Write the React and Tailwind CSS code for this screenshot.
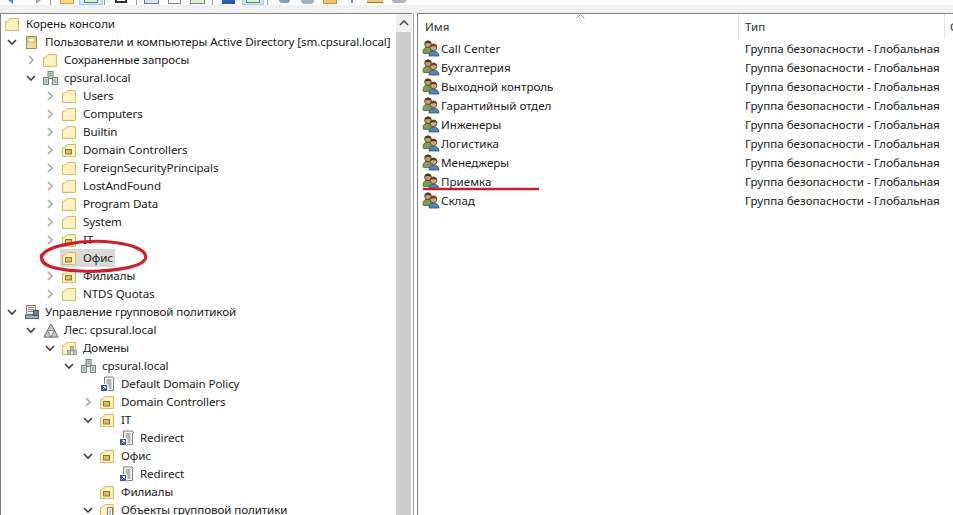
import React from "react";

function Chevron({ open }) {
  return open ? (
    <svg className="shrink-0" width="10" height="10" viewBox="0 0 10 10" fill="none" stroke="#404040" strokeWidth="1.6"><path d="M1 3l4 4 4-4" /></svg>
  ) : (
    <svg className="shrink-0" width="10" height="10" viewBox="0 0 10 10" fill="none" stroke="#a6a6a6" strokeWidth="1.6"><path d="M3 1l4 4-4 4" /></svg>
  );
}

function Folder({ ou, children }) {
  return (
    <svg className="shrink-0" width="15" height="14" viewBox="0 0 15 14">
      <path d="M.5 13.500V4.500h1.500l3-3h8.500v12z" fill="#fbe7a6" stroke="#dcbc6c" />
      <path d="M1.500 5.500h2l3-3h6v10h-11z" fill="#fff3c4" />
      {ou && <rect x="3.500" y="6.500" width="6" height="4.500" fill="#e3bb58" stroke="#8c7432" />}
      {children}
    </svg>
  );
}

function DomainShapes() {
  return (
    <>
      <rect x="5" y="0.500" width="5" height="7" fill="#c5d0cc" stroke="#71837f" />
      <rect x="0.500" y="6.500" width="5" height="7" fill="#cfdad5" stroke="#71837f" />
      <rect x="9.500" y="6.500" width="5" height="7" fill="#cfdad5" stroke="#71837f" />
      <path d="M2 9h2M2 11h2M11 9h2M11 11h2M6.500 2.500h2M6.500 4.500h2" stroke="#5fa35f" />
    </>
  );
}

function Domain() {
  return (
    <svg className="shrink-0" width="15" height="14" viewBox="0 0 15 14"><DomainShapes /></svg>
  );
}

function Snapin() {
  return (
    <svg className="shrink-0" width="15" height="15" viewBox="0 0 15 15">
      <rect x="2.500" y="1.500" width="10" height="12" fill="#efdc9a" stroke="#a08f50" />
      <rect x="4" y="3" width="7" height="4" fill="#fff8d2" stroke="#b5a467" strokeWidth=".8" />
    </svg>
  );
}

function Gpo() {
  return (
    <svg className="shrink-0" width="16" height="16" viewBox="0 0 16 16">
      <path d="M4.500 1h8.500l1.500 1.500-1 .5v11.500h-9z" fill="#f7f7f7" stroke="#7d7d7d" />
      <path d="M6.500 4h5M6.500 6h5M6.500 8h5M8.500 10h3M8.500 12h3" stroke="#777" />
      <rect x="0.500" y="8.500" width="7" height="7" fill="#3d4f9f" stroke="#fff" />
      <path d="M2.500 13.500l3-3M3.500 10.500h2v2" stroke="#fff" fill="none" />
    </svg>
  );
}

function Forest() {
  return (
    <svg className="shrink-0" width="16" height="15" viewBox="0 0 16 15">
      <path d="M8 1l7 13H1z" fill="#e9e9e9" stroke="#707070" />
      <path d="M8 1l3.500 6.500h-7zM4.500 7.500L8 14H1zM11.500 7.500L15 14H8z" fill="#c9c9c9" stroke="#777" strokeWidth=".8" />
    </svg>
  );
}

function GpoMgmt() {
  return (
    <svg className="shrink-0" width="16" height="16" viewBox="0 0 16 16">
      <path d="M2.500 1.500h9v9h-9z" fill="#f3efe0" stroke="#777" />
      <path d="M4 3.500h6M4 5.500h6M4 7.500h6" stroke="#888" />
      <rect x="1.500" y="11" width="13" height="3.500" fill="#a5b2bd" stroke="#56616c" />
      <rect x="9.500" y="6.500" width="5" height="5" fill="#6d8296" stroke="#47535e" />
    </svg>
  );
}

function GroupIcon() {
  return (
    <svg className="shrink-0" width="18" height="17" viewBox="0 0 18 17">
      <path d="M1 12c0-3.500 2-5 5-5s5 1.500 5 5l-2 1.500H1.500z" fill="#7f9c52" stroke="#4a6330" strokeWidth=".8" />
      <circle cx="6" cy="4.200" r="3.400" fill="#c99a68" stroke="#4d3820" strokeWidth=".8" />
      <path d="M2.800 3.800C3 1.500 4.500 .8 6 .8s3 .7 3.200 3C8 2.800 4 2.800 2.800 3.800z" fill="#4a3320" />
      <path d="M7 16c0-3.500 1.800-5 4.500-5s5.500 1.500 5.500 5z" fill="#4f84bd" stroke="#2c5282" strokeWidth=".8" />
      <circle cx="11.500" cy="7.300" r="3.400" fill="#d1a678" stroke="#54402a" strokeWidth=".8" />
      <path d="M8.300 7C8.500 4.700 10 4 11.500 4s3 .7 3.200 3c-1.200-1-5.200-1-6.400 0z" fill="#54402a" />
    </svg>
  );
}

const tree = [
  { lv: 0, icon: "folder", text: "Корень консоли", noChev: true },
  { lv: 1, icon: "snapin", text: "Пользователи и компьютеры Active Directory [sm.cpsural.local]", open: true },
  { lv: 2, icon: "folder", text: "Сохраненные запросы" },
  { lv: 2, icon: "domain", text: "cpsural.local", open: true },
  { lv: 3, icon: "folder", text: "Users" },
  { lv: 3, icon: "folder", text: "Computers" },
  { lv: 3, icon: "folder", text: "Builtin" },
  { lv: 3, icon: "ou", text: "Domain Controllers" },
  { lv: 3, icon: "folder", text: "ForeignSecurityPrincipals" },
  { lv: 3, icon: "folder", text: "LostAndFound" },
  { lv: 3, icon: "folder", text: "Program Data" },
  { lv: 3, icon: "folder", text: "System" },
  { lv: 3, icon: "ou", text: "IT" },
  { lv: 3, icon: "ou", text: "Офис", selected: true, noChev: true },
  { lv: 3, icon: "ou", text: "Филиалы" },
  { lv: 3, icon: "folder", text: "NTDS Quotas" },
  { lv: 1, icon: "gpomgmt", text: "Управление групповой политикой", open: true },
  { lv: 2, icon: "forest", text: "Лес: cpsural.local", open: true },
  { lv: 3, icon: "domains", text: "Домены", open: true },
  { lv: 4, icon: "domain", text: "cpsural.local", open: true },
  { lv: 5, icon: "gpo", text: "Default Domain Policy", noChev: true },
  { lv: 5, icon: "ou", text: "Domain Controllers" },
  { lv: 5, icon: "ou", text: "IT", open: true },
  { lv: 6, icon: "gpo", text: "Redirect", noChev: true },
  { lv: 5, icon: "ou", text: "Офис", open: true },
  { lv: 6, icon: "gpo", text: "Redirect", noChev: true },
  { lv: 5, icon: "ou", text: "Филиалы", noChev: true },
  { lv: 5, icon: "gpofolder", text: "Объекты групповой политики", open: true },
];

const indents = ["pl-[3px]", "pl-[5px]", "pl-[24px]", "pl-[43px]", "pl-[62px]", "pl-[81px]", "pl-[100px]"];

function NodeIcon({ name }) {
  if (name === "folder") return <Folder />;
  if (name === "ou") return <Folder ou />;
  if (name === "domain") return <Domain />;
  if (name === "domains")
    return (
      <Folder>
        <g transform="translate(5 5) scale(.65)"><DomainShapes /></g>
      </Folder>
    );
  if (name === "gpofolder")
    return (
      <Folder>
        <path d="M7.500 4.500h5v9h-5z" fill="#fff" stroke="#777" />
        <path d="M9 7h2M9 9h2M9 11h2" stroke="#888" />
      </Folder>
    );
  if (name === "snapin") return <Snapin />;
  if (name === "gpo") return <Gpo />;
  if (name === "forest") return <Forest />;
  return <GpoMgmt />;
}

function TreeRow({ row }) {
  return (
    <div className={`flex h-[18px] shrink-0 items-center whitespace-nowrap ${indents[row.lv]}`}>
      {row.lv > 0 && (
        <span className="flex w-[17px] shrink-0 items-center">
          {!row.noChev && <Chevron open={row.open} />}
        </span>
      )}
      <span className={`-ml-[2px] flex h-[18px] items-center pl-[2px] pr-[2px] ${row.selected ? "bg-[#d9d9d9]" : ""}`}>
        <span className="flex w-[16px] shrink-0 items-center">
          <NodeIcon name={row.icon} />
        </span>
        <span className="ml-[5px] leading-[18px] tracking-[-0.09px]">{row.text}</span>
      </span>
    </div>
  );
}

const groups = ["Call Center", "Бухгалтерия", "Выходной контроль", "Гарантийный отдел", "Инженеры", "Логистика", "Менеджеры", "Приемка", "Склад"];

// кнопки панели, от которой на снимке видна только нижняя полоска
function Toolbar() {
  return (
    <div className="flex h-[5px] shrink-0 items-start overflow-hidden bg-[#fcfcfc]">
      <div className="ml-[8px] h-[4px] w-[5px] bg-[#4a90d9] [clip-path:polygon(100%_0,100%_100%,0_0)]" />
      <div className="ml-[23px] h-[4px] w-[5px] bg-[#a8a8a8] [clip-path:polygon(0_0,100%_0,0_100%)]" />
      <div className="ml-[9px] h-[5px] w-px bg-[#a0a0a0]" />
      <div className="ml-[9px] h-[4px] w-[14px] border-x border-b border-[#c8a850] bg-[#f6d77c]" />
      <div className="ml-[5px] flex h-[5px] w-[24px] justify-center border-x border-b border-[#99d1ff] bg-[#cce8ff]">
        <div className="h-[3px] w-[14px] border-x border-b border-[#6b7f60] bg-[#dfeed2]" />
      </div>
      <div className="ml-px h-[5px] w-px bg-[#a0a0a0]" />
      <div className="ml-[10px] h-[3px] w-[12px] border-x-2 border-b-2 border-[#333] bg-white" />
      <div className="ml-[9px] h-[5px] w-px bg-[#a0a0a0]" />
      <div className="ml-[7px] h-[4px] w-[15px] border-x border-b border-[#777] bg-[#d3e4ee]" />
      <div className="ml-[9px] h-[4px] w-[13px] border-x border-b border-[#888] bg-white" />
      <div className="ml-[9px] h-[4px] w-[15px] border-x border-b border-[#7f9070] bg-[#dcefd4]" />
      <div className="ml-[7px] h-[5px] w-px bg-[#a0a0a0]" />
      <div className="ml-[9px] h-[4px] w-[13px] bg-[#2a5aa8]" />
      <div className="ml-[7px] flex h-[5px] w-[22px] justify-center border-x border-b border-[#99d1ff] bg-[#cce8ff]">
        <div className="h-[3px] w-[14px] border-x border-b border-[#6b7f60] bg-[#dfeed2]" />
      </div>
      <div className="ml-[3px] h-[5px] w-px bg-[#a0a0a0]" />
      <div className="ml-[11px] h-[3px] w-[11px] rounded-b-full bg-[#7f9fc6]" />
      <div className="ml-[11px] h-[4px] w-[13px] rounded-b-full bg-[#9cb2bd]" />
      <div className="ml-[9px] h-[4px] w-[14px] border-x border-b border-[#b89a40] bg-[#e9c565]" />
      <div className="ml-[14px] h-[3px] w-[2px] bg-[#8a9aa8]" />
      <div className="ml-[14px] h-[3px] w-[16px] border-b border-[#8f7a30] bg-[#e8cf72]" />
      <div className="ml-[9px] h-[3px] w-[14px] rounded-b-full bg-[#aeb6bc]" />
    </div>
  );
}

export default function App() {
  return (
    <div className="relative flex h-[515px] w-[953px] flex-col overflow-hidden bg-white font-['Noto_Sans',sans-serif] text-[11.6px] text-[#1a1a1a]">
      <Toolbar />
      <div className="h-[8px] shrink-0 bg-[#f0f0f0]" />

      <div className="flex min-h-0 flex-1">
        {/* дерево консоли */}
        <div className="flex w-[412px] shrink-0 border-l border-t border-[#808080] pl-px">
          <div className="min-w-0 flex-1 overflow-hidden pt-px">
            {tree.map((row, i) => <TreeRow key={i} row={row} />)}
          </div>
          <div className="flex w-[15px] shrink-0 flex-col bg-[#cdcdcd]">
            <div className="flex h-[18px] items-center justify-center bg-[#f0f0f0]">
              <svg width="10" height="10" viewBox="0 0 10 10" fill="none" stroke="#505050" strokeWidth="1.6"><path d="M1 7l4-4 4 4" /></svg>
            </div>
          </div>
          <div className="w-px shrink-0 bg-[#f0f0f0]" />
        </div>
        <div className="w-[1px] shrink-0 bg-white" />
        <div className="w-[1px] shrink-0 bg-[#a0a0a0]" />
        <div className="w-[3px] shrink-0 bg-white" />
        {/* правая панель */}
        <div className="flex w-[536px] shrink-0 flex-col overflow-hidden border-l border-t border-[#808080]">
          <div className="relative flex h-[25px] shrink-0 items-center text-[#333]">
            <div className="flex h-full w-[321px] shrink-0 items-center border-r border-[#e5e5e5] pl-[7px]">Имя</div>
            <div className="flex h-full w-[206px] shrink-0 items-center border-r border-[#e5e5e5] pl-[6px]">Тип</div>
            <div className="pl-[5px]">О</div>
            <svg className="absolute left-[158px] top-0" width="9" height="5" viewBox="0 0 9 5" fill="none" stroke="#a0a0a0"><path d="M.5 4.500L4.500 .5l4 4" /></svg>
          </div>
          {groups.map((g) => (
            <div key={g} className="flex h-[19px] shrink-0 items-center whitespace-nowrap">
              <div className="flex w-[321px] shrink-0 items-center pl-[4px]">
                <GroupIcon />
                <span className="ml-px">{g}</span>
              </div>
              <span className="pl-[6px]">Группа безопасности - Глобальная</span>
            </div>
          ))}
        </div>
      </div>

      {/* красные пометки поверх скриншота */}
      <svg className="pointer-events-none absolute left-0 top-0" width="953" height="515" viewBox="0 0 953 515" fill="none">
        <path d="M41.500 257C44 246 80 240 105 241.500C132 243.500 147 250 145.500 258C144 267 110 272.500 80 271C55 269.500 38 266 42 254" stroke="#cf1f2e" strokeWidth="3.200" />
        <path d="M423 189H539" stroke="#c8202e" strokeWidth="2.500" />
      </svg>
    </div>
  );
}
